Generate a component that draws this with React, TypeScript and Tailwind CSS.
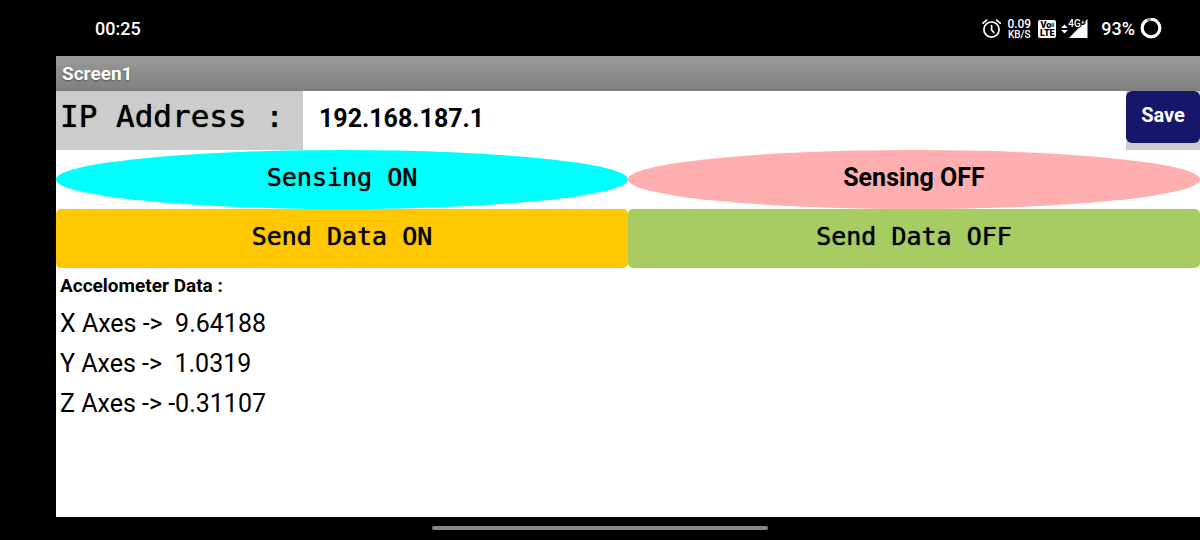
import { useState } from "react";

function AlarmIcon() {
  return (
    <svg viewBox="0 0 20 20" className="h-5 w-5" fill="none" stroke="white" strokeWidth="1.7" strokeLinecap="round" aria-label="Alarm set">
      <circle cx="9.5" cy="10.6" r="7.6" />
      <path d="M9.6 6.6v4.3l2.2 2.6M1 4.2 4.6 1.1M18.2 4.2l-3.6-3.1" />
    </svg>
  );
}

function DataArrows() {
  return (
    <svg viewBox="0 0 7 10" className="h-[10px] w-[7px]" fill="white" aria-hidden="true">
      <path d="M3.5 .4 6.9 4.1H.1zM3.5 9.6.1 5.9h6.8z" />
    </svg>
  );
}

function Signal() {
  return (
    <span className="relative block h-5 w-5">
      <svg viewBox="0 0 20 20" className="h-5 w-5" fill="white" aria-hidden="true">
        <path d="M19.5 0v19H1z" />
      </svg>
      <span className="absolute top-0 left-0 text-[10px] leading-[10px] font-medium whitespace-nowrap [-webkit-text-stroke:2px_black] [paint-order:stroke_fill]">
        4G<span>⁺</span>
      </span>
    </span>
  );
}

function BatteryRing() {
  return (
    <svg viewBox="0 0 22 22" className="h-[22px] w-[22px]" fill="none" strokeWidth="3" aria-label="Battery">
      <circle cx="11" cy="10" r="8.8" stroke="#999" />
      <path d="M11 1.2a8.8 8.8 0 1 1-3.8.86" stroke="white" />
    </svg>
  );
}

function StatusBar() {
  return (
    <header className="flex h-14 items-center bg-black pr-[38px] pl-[95px] pt-px text-white">
      <time className="text-lg leading-6 font-medium">00:25</time>
      <div className="ml-auto flex items-center">
        <AlarmIcon />
        <div className="ml-1 w-[26px] text-center font-medium">
          <div className="text-xs leading-[11px]">0.09</div>
          <div className="text-[10px] leading-[9px]">KB/S</div>
        </div>
        <div className="ml-[6px] flex h-[18px] w-[18px] flex-col items-center justify-center rounded-[2px] bg-white text-[9px] leading-[8px] font-black text-black">
          <span className="whitespace-nowrap">
            Vo<span className="align-top text-[5px]">ll</span>
          </span>
          <span>LTE</span>
        </div>
        <div className="ml-[5px] flex items-center">
          <DataArrows />
          <Signal />
        </div>
        <span className="ml-[13px] text-lg leading-6 font-medium">93%</span>
        <span className="ml-[5px]">
          <BatteryRing />
        </span>
      </div>
    </header>
  );
}

const axes = [
  { label: "X Axes ->", value: " 9.64188" },
  { label: "Y Axes ->", value: " 1.0319" },
  { label: "Z Axes ->", value: "-0.31107" },
];

const action = "h-[59px] flex-1 pb-[3px] text-[25px] leading-8 text-black";
const mono = "font-['DejaVu_Sans_Mono',monospace] text-shadow-[0_0_1px_#000]";

export default function App() {
  const [ip, setIp] = useState("192.168.187.1");

  return (
    <div className="flex min-h-screen flex-col bg-black font-[Roboto,sans-serif] text-black">
      <StatusBar />
      <main className="ml-14 flex flex-1 flex-col bg-white">
        <h1 className="bg-linear-to-b from-[#9a9a9a] to-[#7f7f7f] px-[6px] pt-[6px] pb-[5px] text-[19px] leading-6 font-bold text-white text-shadow-[0_1px_2px_#0006]">
          Screen1
        </h1>
        <div className="flex h-[59px]">
          <label
            htmlFor="ip"
            className={`w-[247px] bg-[#cccccc] pt-[5px] pl-1 text-[31px] leading-10 whitespace-pre ${mono}`}
          >
            IP Address :
          </label>
          <input
            id="ip"
            value={ip}
            onChange={(e) => setIp(e.target.value)}
            className="min-w-0 flex-1 px-4 pb-[3px] text-[25px] leading-8 font-bold outline-none"
          />
          <div className="w-[74px] bg-[#cccccc]">
            <button type="button" className="h-[52px] w-full rounded-md bg-[#16166b] pb-1 text-xl leading-6 font-bold text-white">
              Save
            </button>
          </div>
        </div>
        <div className="flex">
          <button type="button" className={`rounded-[50%] bg-[#00ffff] ${action} ${mono}`}>
            Sensing ON
          </button>
          <button type="button" className={`rounded-[50%] bg-[#ffafaf] font-bold ${action}`}>
            Sensing OFF
          </button>
        </div>
        <div className="flex">
          <button type="button" className={`rounded-[5px] bg-[#ffc800] ${action} ${mono}`}>
            Send Data ON
          </button>
          <button type="button" className={`rounded-[5px] bg-[#a6cc62] ${action} ${mono}`}>
            Send Data OFF
          </button>
        </div>
        <section className="px-1 pt-1">
          <h2 className="mb-1 text-[19px] leading-7 font-bold">Accelometer Data :</h2>
          {axes.map((axis) => (
            <p key={axis.label} className="text-[25px] leading-10 whitespace-pre">
              {axis.label} {axis.value}
            </p>
          ))}
        </section>
      </main>
      <footer className="flex h-[23px] justify-center bg-black pt-[9px]">
        <div className="h-1 w-[28%] rounded-full bg-[#868686]" />
      </footer>
    </div>
  );
}
